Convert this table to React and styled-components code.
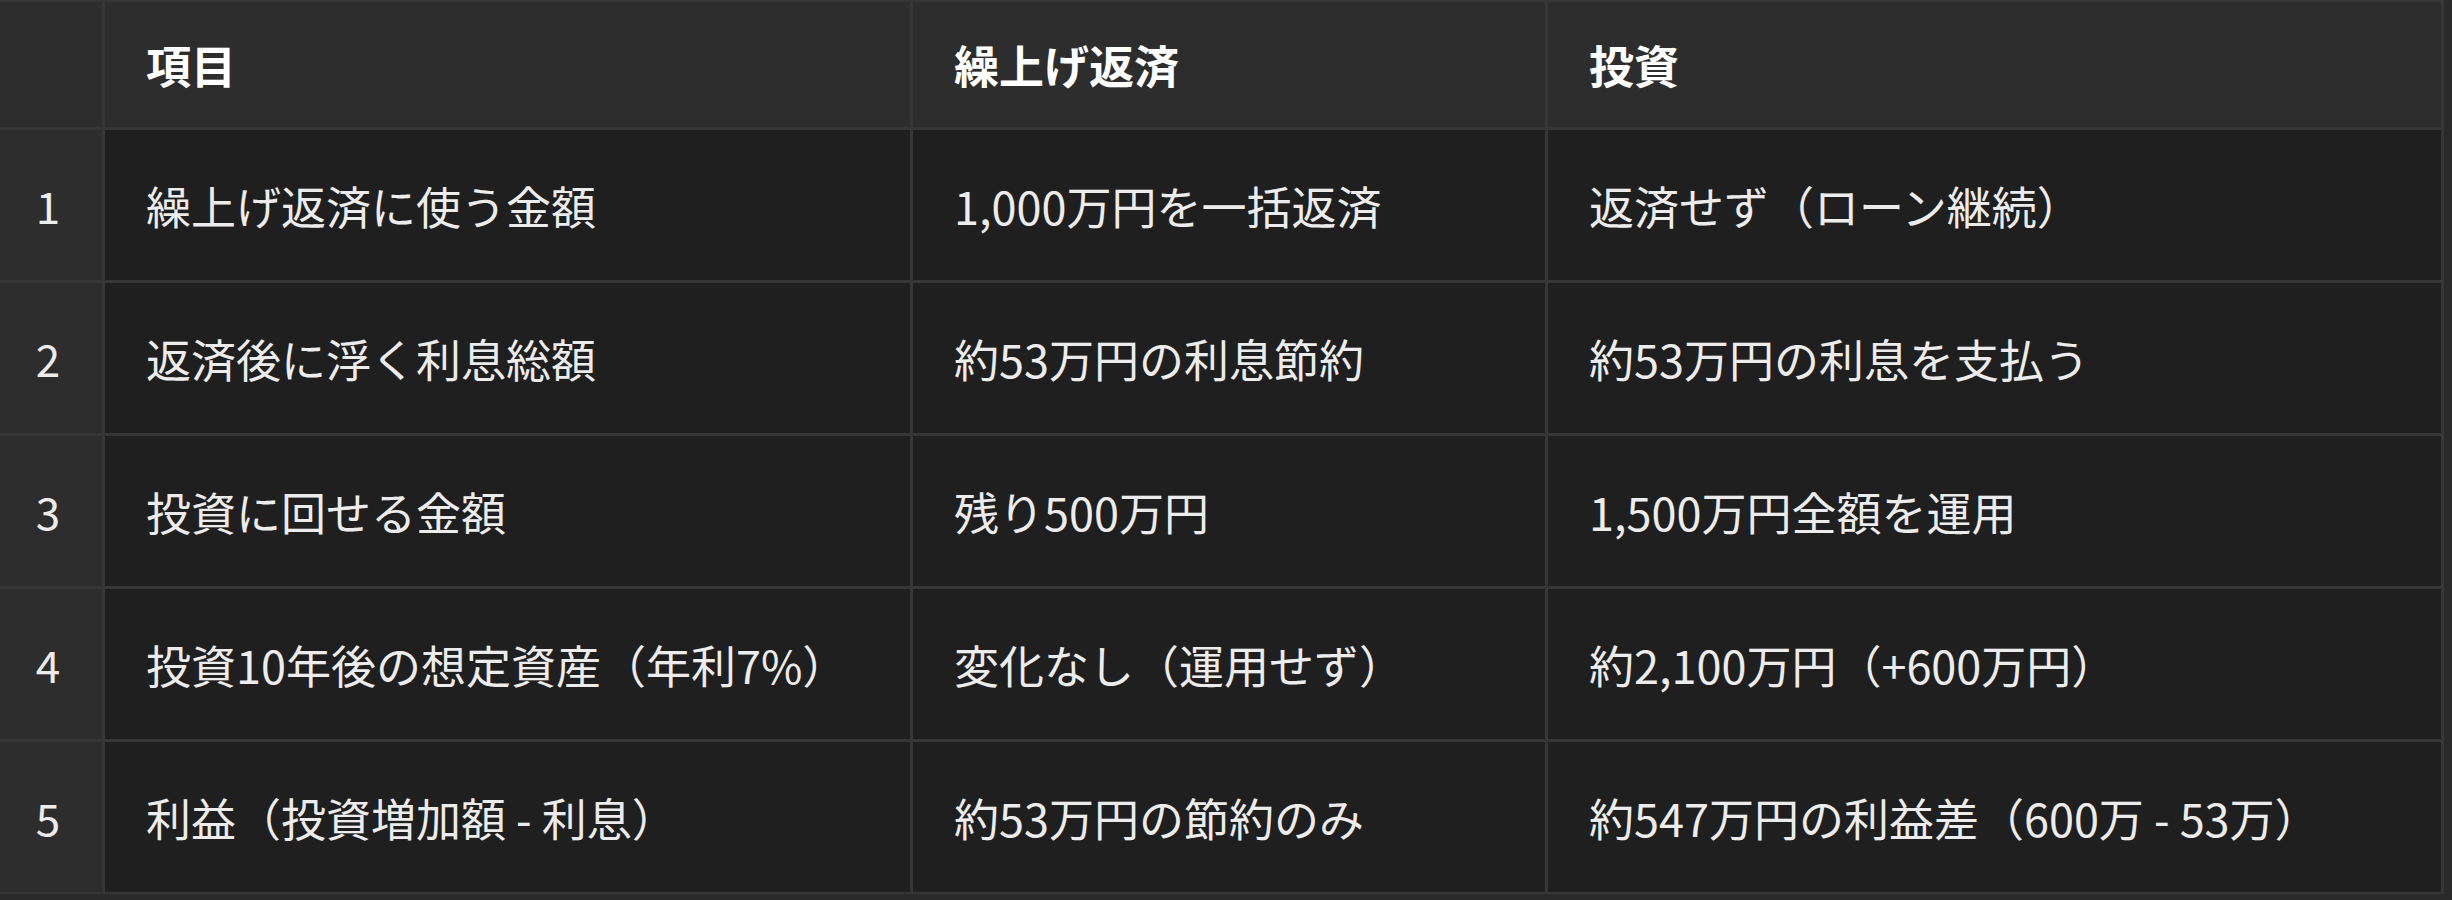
import React from "react";
import styled, { createGlobalStyle } from "styled-components";

const rows = [
  ["繰上げ返済に使う金額", "1,000万円を一括返済", "返済せず（ローン継続）"],
  ["返済後に浮く利息総額", "約53万円の利息節約", "約53万円の利息を支払う"],
  ["投資に回せる金額", "残り500万円", "1,500万円全額を運用"],
  ["投資10年後の想定資産（年利7%）", "変化なし（運用せず）", "約2,100万円（+600万円）"],
  ["利益（投資増加額 - 利息）", "約53万円の節約のみ", "約547万円の利益差（600万 - 53万）"],
];

const GlobalStyle = createGlobalStyle`
  html, body {
    margin: 0;
    padding: 0;
    background: #2a2a2a;
  }
  body {
    font-family: "Noto Sans CJK JP", "Noto Sans", sans-serif;
    -webkit-font-smoothing: antialiased;
  }
`;

const Page = styled.div`
  width: 2452px;
  height: 900px;
  overflow: hidden;
  background: #2a2a2a;
`;

const Grid = styled.div`
  display: grid;
  grid-template-columns: 102px 805px 632px 893px;
  grid-template-rows: 125px repeat(5, 150px);
  gap: 3px;
  width: fit-content;
  padding: 2px 3px 2px 0;
  background: #363636;
`;

const Cell = styled.div`
  display: flex;
  align-items: center;
  padding: 0 0 0 41px;
  font-size: 45px;
  line-height: 1;
  white-space: nowrap;
  color: ${(p) => (p.$head ? "#ffffff" : "#ececec")};
  font-weight: ${(p) => (p.$head ? 600 : 400)};
  background: ${(p) => (p.$head ? "#2d2d2d" : "#1f1f1f")};
`;

const Num = styled(Cell)`
  justify-content: center;
  padding: 0 6px 0 0;
  background: #2d2d2d;
  font-size: 44px;
`;

export default function App() {
  return (
    <Page>
      <GlobalStyle />
      <Grid>
        <Num $head />
        <Cell $head>項目</Cell>
        <Cell $head>繰上げ返済</Cell>
        <Cell $head>投資</Cell>
        {rows.map((r, i) => (
          <React.Fragment key={i}>
            <Num>{i + 1}</Num>
            {r.map((t, j) => (
              <Cell key={j}>{t}</Cell>
            ))}
          </React.Fragment>
        ))}
      </Grid>
    </Page>
  );
}
